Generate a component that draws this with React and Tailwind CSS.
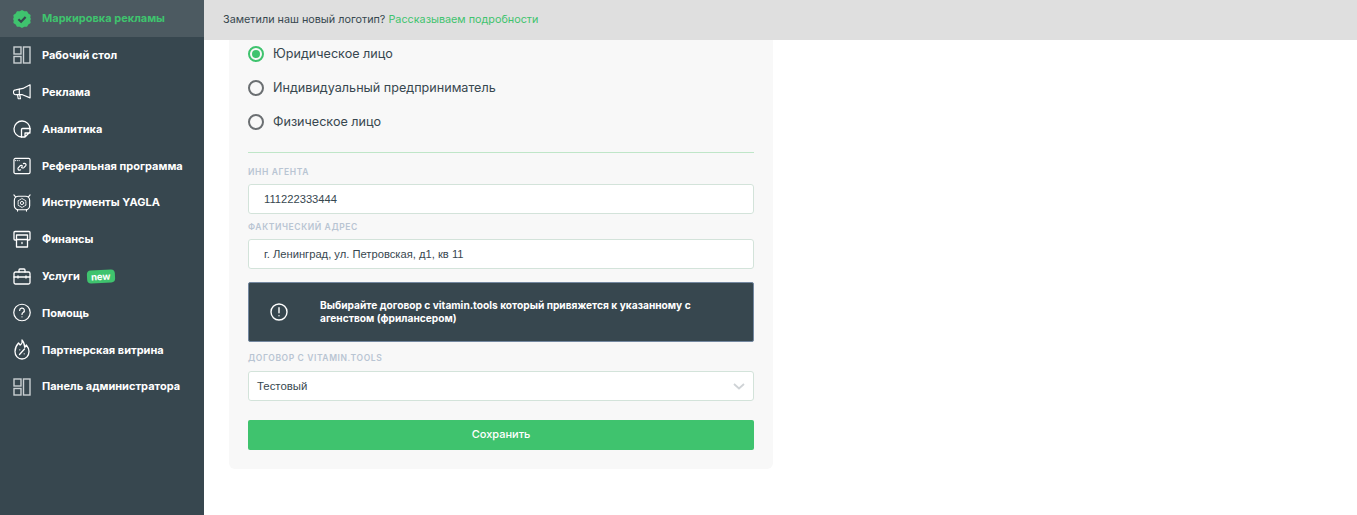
const font = { fontFamily: "Inter, 'Noto Sans', sans-serif" };

function BoardIcon() {
  return (
    <svg width="18" height="18" viewBox="0 0 18 18" fill="none" stroke="#c9cfd2" strokeWidth="1.4">
      <rect x="1" y="1" width="7" height="7" />
      <rect x="1" y="10.5" width="7" height="6.5" />
      <rect x="10.5" y="1" width="6.5" height="16" />
    </svg>
  );
}

const stroke = { fill: "none", stroke: "#fff", strokeWidth: 1.3, strokeLinecap: "round", strokeLinejoin: "round" };

const icons = {
  mark: (
    <svg width="20" height="20" viewBox="0 0 20 20">
      <path fill="#3fc36e" d="M10 0l2.600 1.500 3-.2 1.400 2.700 2.600 1.500-.4 3L20 10l-.8 1.500.4 3-2.600 1.500-1.400 2.700-3-.2L10 20l-2.600-1.500-3 .2L3 16l-2.600-1.500.4-3L0 10l.8-1.500-.4-3L3 4l1.400-2.700 3 .2z" />
      <path d="M6 10.200l3 2.800 5-5.200" fill="none" stroke="#37474f" strokeWidth="2.400" />
    </svg>
  ),
  board: <BoardIcon />,
  ads: (
    <svg width="20" height="18" viewBox="0 0 20 18" {...stroke}>
      <path d="M19 1v14.500L10.500 12H3.500a2.700 2.700 0 0 1-.6-5.400L11 5z" />
      <path d="M7 5.800V12M5 12l.8 4.500h2.500L7.500 12" />
    </svg>
  ),
  chart: (
    <svg width="18" height="18" viewBox="0 0 18 18" {...stroke}>
      <path d="M17 9a8 8 0 1 0-8.500 8" />
      <path d="M8.500 17V9.500a1 1 0 0 1 1-1H17v3.500L12 17zM12 17v-4h5" />
    </svg>
  ),
  ref: (
    <svg width="19" height="18" viewBox="0 0 19 18" {...stroke}>
      <rect x="1" y="1" width="17" height="16" rx="1.500" />
      <path d="M2.500 3.300h.01M4.500 3.300h.01M6.500 3.300h.01" />
      <path d="M8 13l-.7.300a1.600 1.600 0 0 1-1.800-2.400l2-2.100a1.600 1.600 0 0 1 2.400.3M11 6.500l.7-.3a1.600 1.600 0 0 1 1.800 2.400l-2 2.100a1.600 1.600 0 0 1-2.400-.3" />
    </svg>
  ),
  tools: (
    <svg width="20" height="20" viewBox="0 0 20 20" {...stroke}>
      <rect x="1.500" y="2.500" width="17" height="15" rx="4.500" />
      <path d="M1 1l2 2.500M19 1l-2 2.500M5 17.500V19M15 17.500V19" />
      <path d="M10 5l4.300 2.500v5L10 15l-4.300-2.500v-5z" strokeDasharray="2 1" strokeWidth="1" />
      <circle cx="10" cy="10" r="1.800" strokeWidth="1" />
    </svg>
  ),
  finance: (
    <svg width="18" height="18" viewBox="0 0 18 18" {...stroke}>
      <path d="M3.500 10H2a1 1 0 0 1-1-1V2.500a1 1 0 0 1 1-1h14a1 1 0 0 1 1 1V9a1 1 0 0 1-1 1h-1.500" />
      <path d="M3.500 5h11v12h-11zM3.500 9.500h11M9 12.500v1" />
    </svg>
  ),
  services: (
    <svg width="18" height="17" viewBox="0 0 18 17" {...stroke}>
      <rect x="1" y="4" width="16" height="12" rx="1.500" />
      <path d="M6 4V2a1 1 0 0 1 1-1h4a1 1 0 0 1 1 1v2M1 9h16M5 8v2M13 8v2" />
    </svg>
  ),
  help: (
    <svg width="19" height="19" viewBox="0 0 19 19" {...stroke}>
      <circle cx="9.500" cy="9.500" r="8.700" />
      <path d="M7 7.300a2.500 2.500 0 1 1 3.700 2.200c-.8.500-1.200 1-1.200 2M9.500 14h.01" />
    </svg>
  ),
  fire: (
    <svg width="16" height="21" viewBox="0 0 16 21" {...stroke}>
      <path d="M8 1c.8 2.500-.5 4-1.800 5L4.500 4C2.300 6.500 1 9.500 1 12.500 1 16.800 4 20 8 20s7-3.200 7-7.500c0-2.700-1.200-4.700-2.700-6.500l-1.500 2.500C10.500 5.500 10 3 8 1z" />
      <path d="M5.500 15.500l5-5.500M5.800 10.800h.01M10.200 14.800h.01" />
    </svg>
  ),
};

const items = [
  { label: "Рабочий стол", icon: "board" },
  { label: "Реклама", icon: "ads" },
  { label: "Аналитика", icon: "chart" },
  { label: "Реферальная программа", icon: "ref" },
  { label: "Инструменты YAGLA", icon: "tools" },
  { label: "Финансы", icon: "finance" },
  { label: "Услуги", icon: "services", isNew: true },
  { label: "Помощь", icon: "help" },
  { label: "Партнерская витрина", icon: "fire" },
  { label: "Панель администратора", icon: "board" },
];

function Sidebar() {
  return (
    <aside className="w-[204px] shrink-0 bg-[#37474f] min-h-[515px]">
      <div className="h-[37px] bg-[#4c5a61] flex items-center gap-[11px] pl-[13px] text-[11px] font-bold text-[#3fc36e]">
        <span className="w-[18px] flex justify-center">{icons.mark}</span>
        <span>Маркировка рекламы</span>
      </div>
      {items.map((item) => (
        <div key={item.label} className="h-[36.8px] flex items-center gap-[11px] pl-[13px] text-[11px] font-bold text-white">
          <span className="w-[18px] flex justify-center">{icons[item.icon]}</span>
          <span>{item.label}</span>
          {item.isNew && (
            <span className="-ml-[4px] -rotate-3 rounded-[4px] bg-[#3fc36e] px-[4px] h-[13px] leading-[13px] text-[9.5px] font-bold">new</span>
          )}
        </div>
      ))}
    </aside>
  );
}

function Radio({ label, checked }) {
  return (
    <label className="h-[34px] flex items-center gap-[9px] text-[12.6px] text-[#37474f]">
      <span className={`w-4 h-4 rounded-full border-2 flex items-center justify-center ${checked ? "border-[#3fc36e]" : "border-[#6b6f72]"}`}>
        {checked && <span className="w-2 h-2 rounded-full bg-[#3fc36e]" />}
      </span>
      {label}
    </label>
  );
}

function Label({ children }) {
  return <div className="h-[14px] leading-[14px] text-[8.5px] font-semibold tracking-[0.6px] uppercase text-[#b9c5d3]">{children}</div>;
}

function Field({ label, value, className }) {
  return (
    <div className={className}>
      <Label>{label}</Label>
      <div className="mt-[5px] h-[30px] flex items-center pl-[15px] pt-[1px] bg-white border border-[#d3e3da] rounded-[3px] text-[11.2px] text-[#37474f]" style={{ fontFamily: "'Liberation Sans', sans-serif" }}>
        {value}
      </div>
    </div>
  );
}

export default function App() {
  return (
    <div className="flex bg-white min-h-[515px]" style={font}>
      <Sidebar />
      <main className="flex-1 min-w-0">
        <div className="h-10 bg-[#dfdfdf] flex items-center pl-[19px] text-[10.8px] text-[#37474f]">
          Заметили наш новый логотип?&nbsp;<span className="text-[#3fc36e]">Рассказываем подробности</span>
        </div>
        {/* card is scrolled under the top bar, so its first row starts clipped */}
        <div className="ml-[25px] w-[544px] h-[429px] bg-[#f8f8f8] rounded-b-md px-[19px] overflow-hidden">
          <div className="-mt-[3px]">
            <Radio label="Юридическое лицо" checked />
            <Radio label="Индивидуальный предприниматель" />
            <Radio label="Физическое лицо" />
          </div>
          <div className="mt-[13px] h-px bg-[#bfe6c8]" />
          <Field label="ИНН агента" value="111222333444" className="mt-[12px]" />
          <Field label="Фактический адрес" value="г. Ленинград, ул. Петровская, д1, кв 11" className="mt-[6px]" />
          <div className="mt-[13px] h-[60px] flex items-center bg-[#37474f] border border-[#7488a0] rounded-[2px]">
            <svg className="ml-[21px] shrink-0" width="18" height="18" viewBox="0 0 18 18" fill="none" stroke="#fff" strokeWidth="1.400" strokeLinecap="round">
              <circle cx="9" cy="9" r="8" />
              <path d="M9 4.800v5M9 12.800h.01" />
            </svg>
            <p className="ml-[32px] w-[400px] text-[10.2px] leading-[13px] font-bold text-white">
              Выбирайте договор с vitamin.tools который привяжется к указанному с агенством (фрилансером)
            </p>
          </div>
          <div className="mt-[9px]">
            <Label>Договор с vitamin.tools</Label>
          </div>
          <div className="mt-[6px] h-[30px] flex items-center justify-between pl-[8px] pr-[8px] pt-[1px] bg-white border border-[#d3e3da] rounded-[3px] text-[11.4px] text-[#37474f]" style={{ fontFamily: "'Liberation Sans', sans-serif" }}>
            Тестовый
            <svg width="12" height="7" viewBox="0 0 12 7" fill="none" stroke="#cfd3d6" strokeWidth="1.800">
              <path d="M1 1l5 4.500L11 1" />
            </svg>
          </div>
          <button className="mt-[19px] w-full h-[30px] pb-[2px] bg-[#3fc36e] rounded-[2px] text-white text-[11px] font-medium">Сохранить</button>
        </div>
      </main>
    </div>
  );
}
